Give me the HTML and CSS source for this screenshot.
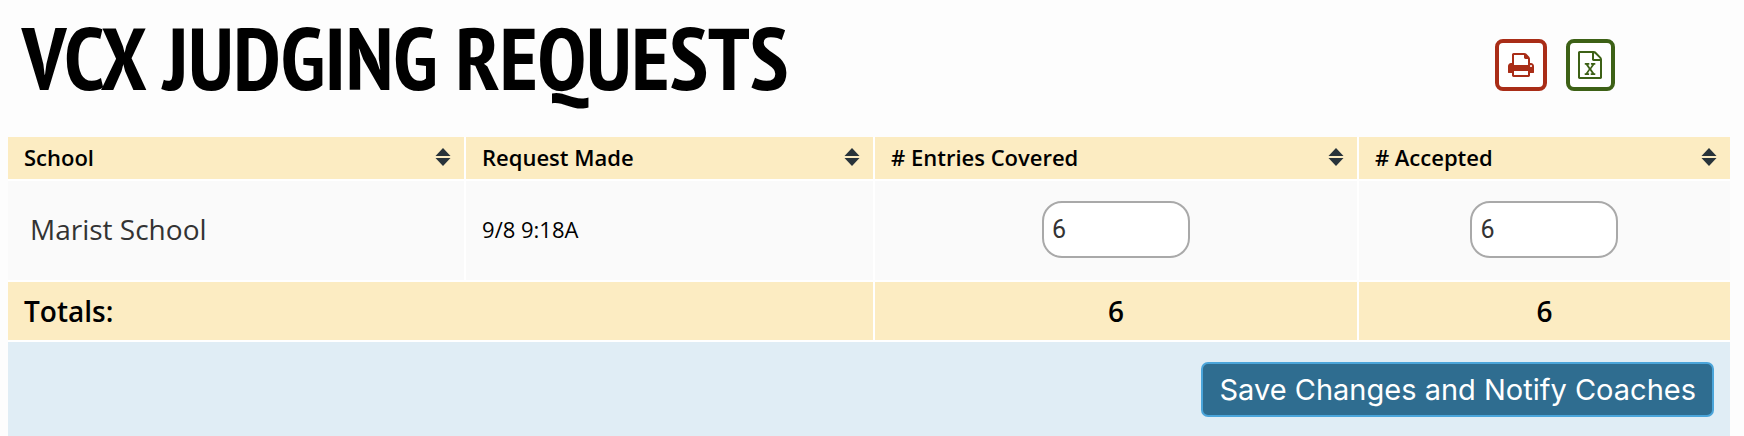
FILE: index.html
```html
<!DOCTYPE html>
<html lang="en">
<head>
<meta charset="utf-8">
<title>VCX Judging Requests</title>
<link rel="stylesheet" href="styles.css">
</head>
<body>
<svg class="sprite" aria-hidden="true">
  <symbol id="sort" viewBox="0 0 16 18"><path d="M8 0L15.500 8H.5zM8 18L.5 10h15z"/></symbol>
</svg>
<header class="page-header">
  <h1 class="title">VCX Judging Requests</h1>
  <div class="exports">
    <button class="export export-print" type="button" aria-label="Print">
      <svg class="export-icon" viewBox="0 0 1792 1792"><path d="M448 1536h896v-256h-896v256zM448 896h896v-384h-160q-40 0-68-28t-28-68v-160h-640v640zM1600 960q0-26-19-45t-45-19-45 19-19 45 19 45 45 19 45-19 19-45zM1728 960v416q0 13-9.500 22.500t-22.500 9.500h-224v160q0 40-28 68t-68 28h-960q-40 0-68-28t-28-68v-160h-224q-13 0-22.500-9.500t-9.500-22.500v-416q0-79 56.500-135.500t135.500-56.500h64v-544q0-40 28-68t68-28h672q40 0 88 20t76 48l152 152q28 28 48 76t20 88v256h64q79 0 135.500 56.500t56.500 135.500z"/></svg>
    </button>
    <button class="export export-excel" type="button" aria-label="Export to Excel">
      <svg class="export-icon" viewBox="128 0 1536 1792"><path d="M1596 380q28 28 48 76t20 88v1152q0 40-28 68t-68 28h-1344q-40 0-68-28t-28-68v-1600q0-40 28-68t68-28h896q40 0 88 20t76 48zm-444-244v376h376q-10-29-22-41l-313-313q-12-12-41-22zm384 1528v-1024h-416q-40 0-68-28t-28-68v-416h-768v1536h1280zm-979-234v106h281v-106h-75l103-161q5-7 10-16.500t7.500-13.500 3.500-4h2q1 4 5 10 2 4 4.500 7.500t6 8 6.500 8.500l107 161h-76v106h291v-106h-68l-192-273 195-282h67v-107h-279v107h74l-103 159q-4 7-10 16.500t-9 13.500l-2 3h-2q-1-4-5-10-6-11-17-23l-106-159h76v-107h-290v107h68l189 272-194 283h-68z"/></svg>
    </button>
  </div>
</header>
<form class="requests">
  <table class="grid">
    <colgroup><col class="col-school"><col class="col-made"><col class="col-covered"><col></colgroup>
    <thead>
      <tr>
        <th scope="col"><button class="sorter" type="button">School<svg class="sort-icon"><use href="#sort"/></svg></button></th>
        <th scope="col"><button class="sorter" type="button">Request Made<svg class="sort-icon"><use href="#sort"/></svg></button></th>
        <th scope="col"><button class="sorter" type="button"># Entries Covered<svg class="sort-icon"><use href="#sort"/></svg></button></th>
        <th scope="col"><button class="sorter" type="button"># Accepted<svg class="sort-icon"><use href="#sort"/></svg></button></th>
      </tr>
    </thead>
    <tbody>
      <tr>
        <td class="school">Marist School</td>
        <td class="made">9/8 9:18A</td>
        <td class="centered"><input class="count" type="text" value="6" aria-label="Entries covered"></td>
        <td class="centered"><input class="count" type="text" value="6" aria-label="Accepted"></td>
      </tr>
    </tbody>
    <tfoot>
      <tr class="totals">
        <th scope="row" colspan="2">Totals:</th>
        <td class="centered">6</td>
        <td class="centered">6</td>
      </tr>
    </tfoot>
  </table>
  <div class="actions">
    <button class="save" type="submit">Save Changes and Notify Coaches</button>
  </div>
</form>
</body>
</html>
```
FILE: styles.css
```css
* {
  box-sizing: border-box;
}

body {
  margin: 0;
  padding: 0 14px 0 8px;
  background: #fdfdfd;
  color: #000;
  font-family: "Open Sans", "Noto Sans", sans-serif;
  font-size: 22px;
  line-height: 30px;
  overflow: hidden;
}

button,
input {
  margin: 0;
  font: inherit;
  color: inherit;
}

button {
  cursor: pointer;
}

.sprite {
  position: absolute;
  width: 0;
  height: 0;
}

.page-header {
  display: flex;
  align-items: flex-start;
  justify-content: space-between;
  padding: 2px 115px 25px 14px;
}

.title {
  margin: 0;
  font-family: "PT Sans Narrow", "Liberation Sans Narrow", "Open Sans", sans-serif;
  font-size: 88px;
  font-weight: 700;
  line-height: 110px;
  text-transform: uppercase;
  white-space: nowrap;
}

.exports {
  display: flex;
  gap: 19px;
  padding-top: 37px;
}

.export {
  display: flex;
  align-items: center;
  padding: 8px;
  border: 4px solid;
  border-radius: 8px;
  background: #fff;
}

.export-print {
  color: #a92d17;
}

.export-excel {
  padding-right: 9px;
  color: #3d6116;
}

.export-icon {
  height: 28px;
  fill: currentColor;
}

.grid {
  width: 100%;
  table-layout: fixed;
  border-collapse: separate;
  border-spacing: 0;
}

.col-school {
  width: 26.6%;
}

.col-made {
  width: 23.75%;
}

.col-covered {
  width: 28.1%;
}

.grid th,
.grid td {
  padding: 0 16px;
  border: solid #fff;
  border-width: 0 2px 2px 0;
  font-weight: 400;
  text-align: left;
}

.grid tr > :last-child {
  border-right: 0;
}

.grid thead th {
  padding: 0;
  background: #fcecc2;
}

.sorter {
  display: flex;
  align-items: center;
  justify-content: space-between;
  width: 100%;
  padding: 5px 13px 7px 16px;
  border: 0;
  background: none;
  font-weight: 600;
}

.sort-icon {
  width: 16px;
  height: 18px;
  fill: #28333a;
}

.grid tbody td {
  height: 101px;
  padding-bottom: 2px;
  background: #fafafa;
}

.grid tbody .school,
.grid tbody .made {
  padding-bottom: 4px;
}

.grid .school {
  padding-left: 22px;
  color: #333;
  font-size: 28px;
}

.grid .centered {
  text-align: center;
}

.count {
  width: 148px;
  height: 57px;
  padding: 0 8px;
  border: 2px solid #a9a9a9;
  border-radius: 20px;
  background: #fff;
  color: #333;
  font-family: Roboto, sans-serif;
  font-size: 25px;
  vertical-align: middle;
}

.grid .totals > * {
  height: 60px;
  background: #fcecc2;
  font-size: 28px;
  font-weight: 600;
}

.actions {
  display: flex;
  justify-content: flex-end;
  padding: 20px 16px 24px;
  background: #e0edf5;
}

.save {
  padding: 11px 16px 10px;
  border: 2px solid #4ba5da;
  border-radius: 7px;
  background: #2f6d90;
  color: #fff;
  font-family: Inter, Roboto, sans-serif;
  font-size: 29px;
}
```
